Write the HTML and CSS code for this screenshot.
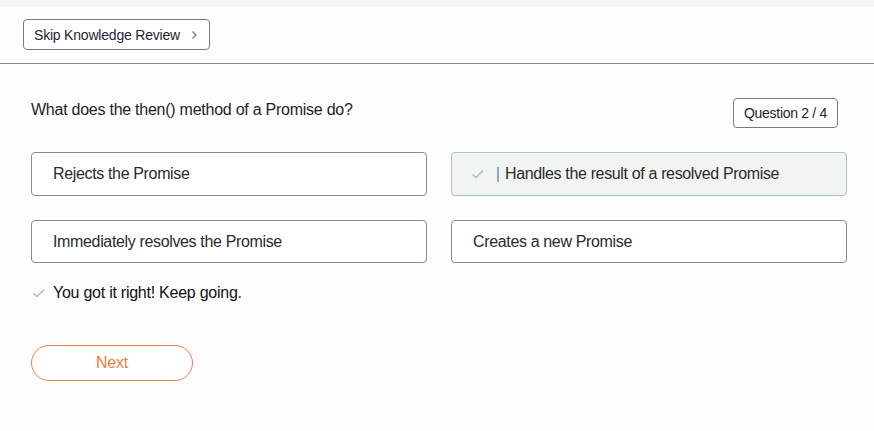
FILE: index.html
```html
<!DOCTYPE html>
<html>
<head>
<meta charset="utf-8">
<link rel="stylesheet" href="styles.css">
</head>
<body>
<div class="topstrip"></div>
<header class="header">
  <button class="skip">Skip Knowledge Review
    <svg class="chev" width="8" height="10" viewBox="0 0 8 10"><path d="M2.5 1.5 L6 5 L2.5 8.5" fill="none" stroke="#777" stroke-width="1.3"/></svg>
  </button>
</header>
<main class="content">
  <div class="qrow">
    <h1 class="question">What does the then() method of a Promise do?</h1>
    <div class="badge">Question 2 / 4</div>
  </div>
  <div class="options">
    <div class="option">Rejects the Promise</div>
    <div class="option selected">
      <svg class="ocheck" width="14" height="12" viewBox="0 0 14 12"><path d="M1.5 6.5 L5 9.5 L12 2.5" fill="none" stroke="#a8c4ad" stroke-width="1.4"/></svg>
      <span class="bar"></span>
      <span>Handles the result of a resolved Promise</span>
    </div>
    <div class="option">Immediately resolves the Promise</div>
    <div class="option">Creates a new Promise</div>
  </div>
  <div class="feedback">
    <svg class="fcheck" width="14" height="12" viewBox="0 0 14 12"><path d="M1.5 6.5 L5 9.5 L12 2.5" fill="none" stroke="#a8c4ad" stroke-width="1.4"/></svg>
    <span>You got it right! Keep going.</span>
  </div>
  <button class="next">Next</button>
</main>
</body>
</html>
```
FILE: styles.css
```css
* { box-sizing: border-box; }
html, body { margin: 0; padding: 0; }
body {
  background: #fdfdfd;
  font-family: "Liberation Sans", Arial, sans-serif;
  color: #1f1f1f;
  width: 874px;
  height: 431px;
  overflow: hidden;
}
.topstrip { height: 7px; background: #f5f6fa; }
.header {
  height: 57px;
  background: #fefefe;
  border-bottom: 1px solid #8a8a8a;
  padding: 12px 0 0 23px;
}
.skip {
  display: flex;
  align-items: center;
  gap: 10px;
  height: 31px;
  padding: 0 11px 0 10px;
  border: 1px solid #7a7a7a;
  border-radius: 4px;
  background: #fff;
  font-family: inherit;
  font-size: 14px;
  color: #1f2430;
  letter-spacing: -0.2px;
}
.content { padding: 34px 27px 0 31px; }
.qrow { display: flex; justify-content: space-between; align-items: flex-start; height: 54px; }
.question {
  margin: 2px 0 0;
  font-size: 16px;
  line-height: 20px;
  font-weight: normal;
  letter-spacing: -0.25px;
  color: #1f1f1f;
}
.badge {
  margin: 0 9px 0 0;
  height: 30px;
  padding: 0 10px;
  display: flex;
  align-items: center;
  border: 1px solid #7a7a7a;
  border-radius: 4px;
  font-size: 14px;
  letter-spacing: -0.3px;
  background: #fff;
}
.options {
  display: grid;
  grid-template-columns: 396px 396px;
  grid-template-rows: 44px 43px;
  column-gap: 24px;
  row-gap: 24px;
}
.option {
  display: flex;
  align-items: center;
  padding-left: 21px;
  border: 1px solid #8a8a8a;
  border-radius: 4px;
  background: #fff;
  font-size: 16px;
  letter-spacing: -0.35px;
  color: #2a2a2a;
}
.option.selected {
  background: #f0f5f1;
  border-color: #a8c9ad;
  padding-left: 19px;
}
.ocheck { margin-right: 12px; }
.bar { width: 2px; height: 15px; background: #8ea6c9; margin-right: 6px; }
.feedback {
  display: flex;
  align-items: center;
  height: 18px;
  margin-top: 21px;
  font-size: 16px;
  letter-spacing: -0.25px;
  color: #111;
}
.fcheck { margin: 0 7px 0 1px; }
.next {
  margin-top: 43px;
  width: 162px;
  height: 36px;
  border: 1px solid #f47c45;
  border-radius: 18px;
  background: #fff;
  color: #f47c45;
  font-family: inherit;
  font-size: 16px;
  letter-spacing: -0.2px;
}
```
